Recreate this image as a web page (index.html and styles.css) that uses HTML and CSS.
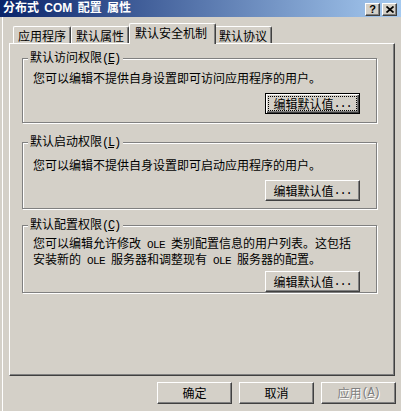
FILE: index.html
```html
<!DOCTYPE html>
<html lang="zh-CN">
<head>
<meta charset="utf-8">
<title>分布式 COM 配置 属性</title>
<link rel="stylesheet" href="styles.css">
</head>
<body>
<div class="win">
  <div class="titlebar">
    <span class="title">分布式 <span class="lat">COM</span> 配置 属性</span>
    <div class="capbtns">
      <span class="capbtn help">?</span>
      <span class="capbtn close"><svg width="8" height="7" viewBox="0 0 8 7"><path d="M0.5 0.5 L7.5 6.5 M7.5 0.5 L0.5 6.5" stroke="#000" stroke-width="1.7" fill="none"/></svg></span>
    </div>
  </div>
  <div class="tabs">
    <div class="tab">应用程序</div>
    <div class="tab">默认属性</div>
    <div class="tab sel">默认安全机制</div>
    <div class="tab">默认协议</div>
  </div>
  <div class="panel">
    <div class="group g1">
      <div class="legend">默认访问权限<span class="m">(<u>E</u>)</span></div>
      <p class="desc">您可以编辑不提供自身设置即可访问应用程序的用户。</p>
      <div class="btn-row"><button class="btn def"><span class="focus">编辑默认值<span class="m">...</span></span></button></div>
    </div>
    <div class="group g2">
      <div class="legend">默认启动权限<span class="m">(<u>L</u>)</span></div>
      <p class="desc">您可以编辑不提供自身设置即可启动应用程序的用户。</p>
      <div class="btn-row"><button class="btn">编辑默认值<span class="m">...</span></button></div>
    </div>
    <div class="group g3">
      <div class="legend">默认配置权限<span class="m">(<u>C</u>)</span></div>
      <p class="desc">您可以编辑允许修改<span class="m sm"> OLE </span>类别配置信息的用户列表。这包括<br>安装新的<span class="m sm"> OLE </span>服务器和调整现有<span class="m sm"> OLE </span>服务器的配置。</p>
      <div class="btn-row"><button class="btn">编辑默认值<span class="m">...</span></button></div>
    </div>
  </div>
  <div class="footer">
    <button class="btn fbtn">确定</button>
    <button class="btn fbtn">取消</button>
    <button class="btn fbtn dis">应用<span class="m">(<u>A</u>)</span></button>
  </div>
</div>
</body>
</html>
```
FILE: styles.css
```css
* { box-sizing: border-box; }
html, body { margin: 0; padding: 0; }
body {
  width: 401px;
  height: 411px;
  overflow: hidden;
  background: #d4d0c8;
  font-family: "Noto Sans CJK SC", sans-serif;
  font-size: 12px;
  line-height: 12px;
  color: #000;
}
.win {
  height: 411px;
  background: linear-gradient(to right, #d4d0c8 2px, #ffffff 2px, #ffffff 3px, #d4d0c8 3px);
}
.titlebar {
  height: 17px;
  display: flex;
  justify-content: space-between;
  align-items: flex-start;
  padding: 0 4px 0 3px;
  background: linear-gradient(to right, #0a246a, #a6caf0);
}
.title {
  color: #fff;
  font-weight: bold;
  font-size: 12px;
  line-height: 17px;
  font-family: "Liberation Sans", "Noto Sans CJK SC", sans-serif;
  word-spacing: 2px;
  white-space: nowrap;
}
.title .lat { font-size: 12px; }
.capbtns {
  display: flex;
  gap: 2px;
  margin-top: 3px;
}
.capbtn {
  width: 15px;
  height: 13px;
  background: #d4d0c8;
  border: 1px solid;
  border-color: #fff #404040 #404040 #fff;
  box-shadow: inset -1px -1px #808080;
  display: flex;
  align-items: center;
  justify-content: center;
  font: bold 11px/11px "Liberation Sans", sans-serif;
  color: #000;
}
.tabs {
  display: flex;
  align-items: flex-end;
  height: 26px;
  padding-left: 13px;
}
.tab {
  position: relative;
  padding: 3px 4px 1px 4px;
  border-left: 1px solid #fff;
  border-top: 1px solid #fff;
  border-right: 1px solid #404040;
  box-shadow: inset -1px 0 #808080;
  border-radius: 2px 2px 0 0;
  white-space: nowrap;
  background: #d4d0c8;
}
.tab.sel {
  z-index: 2;
  margin: 0 -2px -1px 0;
  padding: 3px 8px 5px 5px;
}
.panel {
  position: relative;
  z-index: 1;
  margin-left: 9px;
  width: 386px;
  height: 333px;
  border: 1px solid;
  border-color: #fff #404040 #404040 #fff;
  box-shadow: inset -1px -1px #808080;
  padding: 14px 0 0 12px;
}
.group {
  position: relative;
  width: 355px;
  border: 1px solid #808080;
  box-shadow: inset 1px 1px #fff, 1px 1px #fff;
  display: flex;
  flex-direction: column;
  padding: 0 16px 0 10px;
}
.g1 { height: 65px; padding-top: 13px; }
.g2 { height: 67px; margin-top: 19px; padding-top: 16px; }
.g3 { height: 68px; margin-top: 16px; padding-top: 10px; }
.legend {
  position: absolute;
  top: -8px;
  left: 5px;
  padding: 0 3px 0 2px;
  background: #d4d0c8;
  white-space: nowrap;
}
.desc {
  margin: 0;
  white-space: nowrap;
}
.g3 .desc { line-height: 13px; }
.btn-row {
  display: flex;
  justify-content: flex-end;
}
.g1 .btn-row, .g2 .btn-row { margin-top: 9px; }
.g3 .btn-row { margin-top: 3px; }
.m {
  font-family: "Liberation Mono", monospace;
  font-size: 12px;
  letter-spacing: -1.2px;
}
.m.sm {
  font-size: 11px;
  letter-spacing: -0.6px;
}
.btn {
  width: 95px;
  height: 21px;
  padding: 0;
  margin: 0;
  font: inherit;
  color: #000;
  background: #d4d0c8;
  border: 1px solid;
  border-color: #fff #404040 #404040 #fff;
  border-radius: 0;
  box-shadow: inset -1px -1px #808080;
  display: flex;
  align-items: center;
  justify-content: center;
  white-space: nowrap;
}
.btn.def {
  border-color: #000;
  box-shadow: inset 1px 1px #fff, inset -1px -1px #404040, inset -2px -2px #808080;
}
.focus {
  flex: 1;
  align-self: stretch;
  margin: 2px;
  border: 1px dotted #000;
  display: flex;
  align-items: center;
  justify-content: center;
}
.footer {
  display: flex;
  justify-content: flex-end;
  gap: 7px;
  padding: 6px 5px 0 0;
}
.fbtn {
  width: 75px;
  height: 22px;
}
.btn.dis {
  color: #808080;
  text-shadow: 1px 1px #fff;
}
```
